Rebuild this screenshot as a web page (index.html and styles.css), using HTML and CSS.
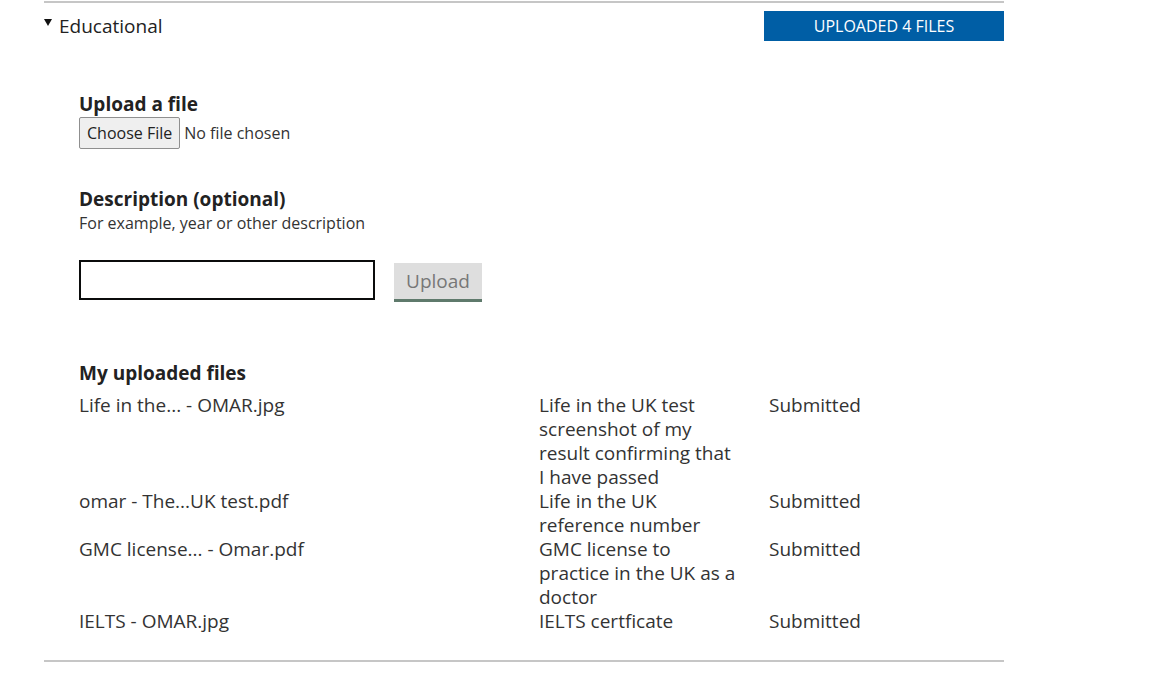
FILE: index.html
```html
<!DOCTYPE html>
<html lang="en">
<head>
  <meta charset="UTF-8">
  <title>Educational documents</title>
  <meta name="viewport" content="width=device-width, initial-scale=1.0">
  <link rel="stylesheet" href="styles.css">
</head>
<body>

  <div class="section">
    <div class="section-head">
      <div class="section-title"><span class="arrow"></span>Educational</div>
      <div class="badge">UPLOADED 4 FILES</div>
    </div>

    <div class="section-body">
      <!-- Upload -->
      <div class="field">
        <label class="label" for="file">Upload a file</label>
        <input type="file" id="file" class="file-input">
      </div>

      <div class="field">
        <label class="label" for="desc">Description (optional)</label>
        <div class="hint">For example, year or other description</div>
        <div class="upload-row">
          <input type="text" id="desc" class="text-input">
          <button class="btn-upload" disabled>Upload</button>
        </div>
      </div>

      <!-- Files -->
      <h3 class="label files-title">My uploaded files</h3>
      <div class="files">
        <div class="file-name">Life in the... - OMAR.jpg</div>
        <div class="file-desc">Life in the UK test screenshot of my result confirming that I have passed</div>
        <div class="file-status">Submitted</div>

        <div class="file-name">omar - The...UK test.pdf</div>
        <div class="file-desc">Life in the UK reference number</div>
        <div class="file-status">Submitted</div>

        <div class="file-name">GMC license... - Omar.pdf</div>
        <div class="file-desc">GMC license to practice in the UK as a doctor</div>
        <div class="file-status">Submitted</div>

        <div class="file-name">IELTS - OMAR.jpg</div>
        <div class="file-desc">IELTS certficate</div>
        <div class="file-status">Submitted</div>
      </div>
    </div>
  </div>

</body>
</html>
```

FILE: styles.css
```css
body {
  font-family: "Open Sans", Arial, sans-serif;
  margin: 0;
  padding: 1px 0 0 44px;
  color: #333;
  background: #fff;
}

.section {
  width: 960px;
  border-top: 2px solid #c6c6c6;
  border-bottom: 2px solid #c6c6c6;
}

.section-head {
  display: flex;
  justify-content: space-between;
  align-items: center;
  padding-top: 8px;
}

.section-title {
  display: flex;
  align-items: center;
  font-size: 19px;
  line-height: 30px;
  color: #222;
  margin-top: -1px;
}

.arrow {
  width: 0;
  height: 0;
  border-left: 4px solid transparent;
  border-right: 4px solid transparent;
  border-top: 7px solid #111;
  margin: 0 7px 7px 0;
}

.badge {
  width: 240px;
  height: 30px;
  line-height: 30px;
  background: #005ea5;
  color: #fff;
  font-size: 16px;
  text-align: center;
}

.section-body {
  padding: 51px 0 27px 35px;
}

.label {
  display: block;
  font-size: 19px;
  font-weight: 700;
  line-height: 24px;
  color: #222;
  margin: 0;
}

.field {
  margin-bottom: 38px;
}

.file-input {
  font-family: "Open Sans", Arial, sans-serif;
  font-size: 16px;
  color: #333;
  margin: 1px 0 0;
}

.file-input::file-selector-button {
  font-family: "Open Sans", Arial, sans-serif;
  font-size: 16px;
  color: #222;
  background: #efefef;
  border: 1px solid #8f8f8f;
  border-radius: 2px;
  padding: 4px 7px;
  margin-right: 4px;
}

.hint {
  font-size: 16px;
  line-height: 24px;
  color: #333;
}

.upload-row {
  display: flex;
  align-items: flex-start;
  margin-top: 25px;
}

.text-input {
  width: 296px;
  height: 40px;
  box-sizing: border-box;
  border: 2px solid #0b0c0c;
  margin: 0;
  font-size: 16px;
}

.btn-upload {
  margin: 3px 0 0 19px;
  width: 88px;
  height: 39px;
  background: #dedede;
  border: none;
  border-bottom: 3px solid #5f7a6c;
  font-family: "Open Sans", Arial, sans-serif;
  font-size: 19px;
  color: #777;
  padding: 0;
}

.files-title {
  margin-top: 59px;
  margin-bottom: 8px;
}

.files {
  display: grid;
  grid-template-columns: 430px 202px auto;
  column-gap: 30px;
  font-size: 19px;
  line-height: 24px;
  color: #333;
}

.file-status {
  margin-left: -2px;
}
```
